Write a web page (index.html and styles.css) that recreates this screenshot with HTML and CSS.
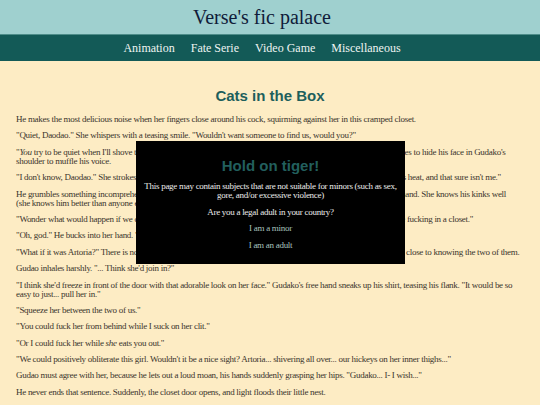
FILE: index.html
```html
<!DOCTYPE html>
<html lang="en">
<head>
    <meta charset="UTF-8">
    <meta name="viewport" content="width=device-width, initial-scale=1.0">
    <title>Cats in the Box - Verse's fic palace</title>
    <link rel="stylesheet" href="styles.css">
</head>
<body>
    <header class="site-header">
        <div class="site-title">Verse's fic palace</div>
    </header>
    <nav class="site-nav">
        <a href="#">Animation</a>
        <a href="#">Fate Serie</a>
        <a href="#">Video Game</a>
        <a href="#">Miscellaneous</a>
    </nav>

    <main class="story">
        <h1 class="story-title">Cats in the Box</h1>

        <p>He makes the most delicious noise when her fingers close around his cock, squirming against her in this cramped closet.</p>
        <p>"Quiet, Daodao." She whispers with a teasing smile. "Wouldn't want someone to find us, would you?"</p>
        <p>"<em>You</em> try to be quiet when I'll shove the door open on us any second." Gudao huffs and leans in close, turning as he tries to hide his face in Gudako's shoulder to muffle his voice.</p>
        <p>"I don't know, Daodao." She strokes him slowly, lazily, teasingly. "Someone here has to keep a cool head in all of this heat, and that sure isn't me."</p>
        <p>He grumbles something incomprehensible, his hips still twitching so, so helplessly in time with the slow pull of her hand. She knows his kinks well<br>(she knows him better than anyone else, after all).</p>
        <p>"Wonder what would happen if we couldn't keep it down, and then somebody opened the door up and found us there fucking in a closet."</p>
        <p>"Oh, god." He bucks into her hand. "Don't say things like that."</p>
        <p>"What if it was Artoria?" There is not a single servant here, in all of Chaldea, who could ever honestly claim to come close to knowing the two of them.</p>
        <p>Gudao inhales harshly. "... Think she'd join in?"</p>
        <p>"I think she'd freeze in front of the door with that adorable look on her face." Gudako's free hand sneaks up his shirt, teasing his flank. "It would be so easy to just... pull her in."</p>
        <p>"Squeeze her between the two of us."</p>
        <p>"You could fuck her from behind while I suck on her clit."</p>
        <p>"Or I could fuck her while <em>she</em> eats you out."</p>
        <p>"We could positively obliterate this girl. Wouldn't it be a nice sight? Artoria... shivering all over... our hickeys on her inner thighs..."</p>
        <p>Gudao must agree with her, because he lets out a loud moan, his hands suddenly grasping her hips. "Gudako... I- I wish..."</p>
        <p>He never ends that sentence. Suddenly, the closet door opens, and light floods their little nest.</p>
    </main>

    <div class="age-gate">
        <h2 class="age-gate-title">Hold on tiger!</h2>
        <p>This page may contain subjects that are not suitable for minors (such as sex, gore, and/or excessive violence)</p>
        <p>Are you a legal adult in your country?</p>
        <a href="#" class="age-gate-option">I am a minor</a>
        <a href="#" class="age-gate-option">I am an adult</a>
    </div>
</body>
</html>
```

FILE: styles.css
```css
* {
    margin: 0;
    padding: 0;
    box-sizing: border-box;
}

body {
    font-family: "Liberation Serif", "Times New Roman", serif;
    background-color: #fdecc4;
    color: #3a342c;
}

.site-header {
    background-color: #9fd0cf;
    height: 35px;
    display: flex;
    align-items: center;
    justify-content: center;
    padding-right: 16px;
    border-bottom: 1px solid #4e8d8a;
}

.site-title {
    font-size: 20px;
    color: #101c3a;
}

.site-nav {
    background-color: #135a57;
    height: 26px;
    display: flex;
    align-items: center;
    justify-content: center;
    gap: 16px;
    padding-right: 16px;
}

.site-nav a {
    color: #eef4f2;
    text-decoration: none;
    font-size: 12px;
}

.story {
    padding: 0 16px;
}

.story-title {
    font-family: "Liberation Sans", Arial, sans-serif;
    font-size: 15px;
    font-weight: bold;
    color: #1e5f5c;
    text-align: center;
    margin: 26px 0 11px;
}

.story p {
    font-size: 9px;
    line-height: 9px;
    letter-spacing: -0.28px;
    margin-bottom: 7.4px;
}

/* age verification box */
.age-gate {
    position: fixed;
    top: 141px;
    left: 136px;
    width: 269px;
    height: 123px;
    background-color: #000;
    color: #ececec;
    text-align: center;
    padding: 16px 4px 0;
    display: flex;
    flex-direction: column;
    align-items: center;
}

.age-gate-title {
    font-family: "Liberation Sans", Arial, sans-serif;
    font-size: 15px;
    font-weight: bold;
    color: #225f5d;
    margin-bottom: 8px;
}

.age-gate p,
.age-gate-option {
    font-size: 9px;
    line-height: 9px;
    letter-spacing: -0.28px;
    margin-bottom: 7.5px;
}

.age-gate-option {
    color: #a7c2be;
    text-decoration: none;
}
```
